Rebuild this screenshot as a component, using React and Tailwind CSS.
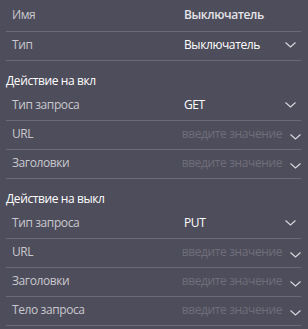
const Chevron = ({ className }) => (
  <svg width="11" height="6" viewBox="0 0 11 6" className={className}>
    <polyline points="0.5,0.5 5.5,5 10.5,0.5" fill="none" stroke="#d9d9de" strokeWidth="1.1" />
  </svg>
);

const Row = ({ label, value, placeholder, select, first }) => (
  <div className={`flex items-center whitespace-nowrap border-b border-[#6b6a77] ml-[6px] mr-[7px] ${first ? "h-[32px] pb-[2px]" : "h-[29px] pb-[3px]"}`}>
    <span className={`pl-[6px] text-[#c9c8ce] ${placeholder ? "flex-1" : "w-[178px] shrink-0"}`}>{label}</span>
    {placeholder ? (
      <div className="flex items-center">
        <span className="text-[#6f6e7a]">введите значение</span>
        <Chevron className="ml-[8px] mt-[6px]" />
      </div>
    ) : (
      <div className="flex-1 flex items-center justify-between pr-[5px]">
        <span className={first ? "text-[#e4e4e8] font-semibold" : "text-white"}>{value}</span>
        {select && <Chevron />}
      </div>
    )}
  </div>
);

const Header = ({ title }) => (
  <div className="h-[31px] flex items-end pb-[3px] pl-[6px] text-white">{title}</div>
);

export default function App() {
  return (
    <div
      className="w-[308px] h-[329px] bg-[#4e4d5b] overflow-hidden text-[12px] leading-[16px] tracking-[-0.4px]"
      style={{ fontFamily: '"Open Sans", "Noto Sans", sans-serif' }}
    >
      <Row label="Имя" value="Выключатель" first />
      <Row label="Тип" value="Выключатель" select />
      <Header title="Действие на вкл" />
      <Row label="Тип запроса" value="GET" select />
      <Row label="URL" placeholder />
      <Row label="Заголовки" placeholder />
      <Header title="Действие на выкл" />
      <Row label="Тип запроса" value="PUT" select />
      <Row label="URL" placeholder />
      <Row label="Заголовки" placeholder />
      <Row label="Тело запроса" placeholder />
    </div>
  );
}
